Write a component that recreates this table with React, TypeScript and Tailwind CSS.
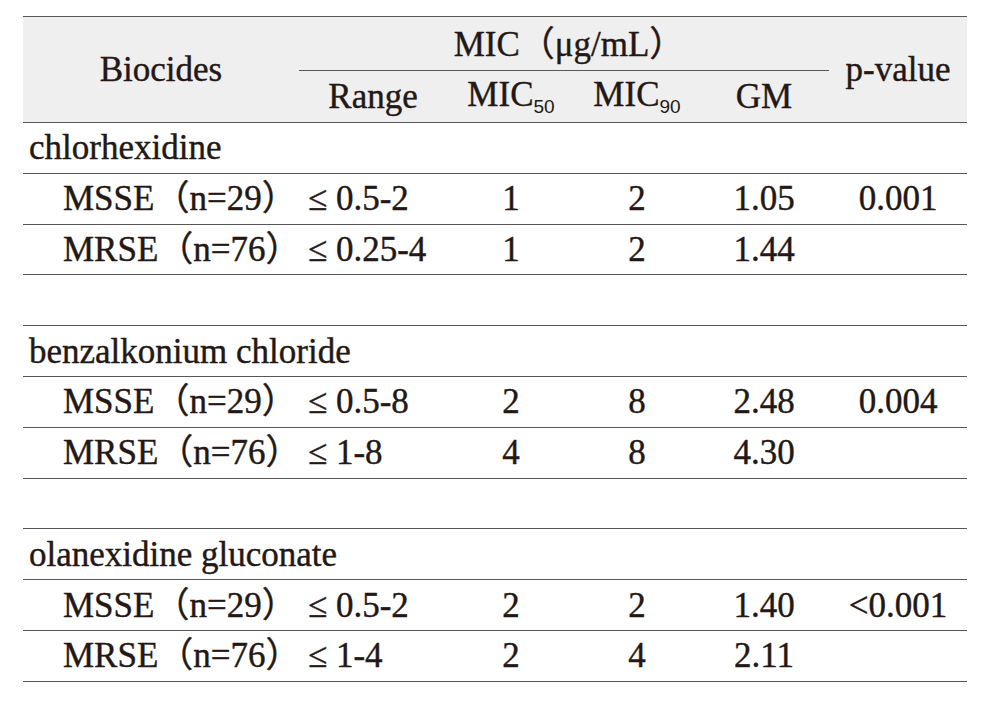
import React from 'react';

const cols = 'grid grid-cols-[276px_148px_128px_124px_130px_138px]';
const line = 'border-[#5a5656]';

type Sub = { name: string; range: string; m50: string; m90: string; gm: string; p?: string };
type Group = { title: string; rows: Sub[] };

const groups: Group[] = [
  {
    title: 'chlorhexidine',
    rows: [
      { name: 'MSSE（n=29）', range: '≤ 0.5-2', m50: '1', m90: '2', gm: '1.05', p: '0.001' },
      { name: 'MRSE（n=76）', range: '≤ 0.25-4', m50: '1', m90: '2', gm: '1.44' },
    ],
  },
  {
    title: 'benzalkonium chloride',
    rows: [
      { name: 'MSSE（n=29）', range: '≤ 0.5-8', m50: '2', m90: '8', gm: '2.48', p: '0.004' },
      { name: 'MRSE（n=76）', range: '≤ 1-8', m50: '4', m90: '8', gm: '4.30' },
    ],
  },
  {
    title: 'olanexidine gluconate',
    rows: [
      { name: 'MSSE（n=29）', range: '≤ 0.5-2', m50: '2', m90: '2', gm: '1.40', p: '<0.001' },
      { name: 'MRSE（n=76）', range: '≤ 1-4', m50: '2', m90: '4', gm: '2.11' },
    ],
  },
];

function Row({ children }: { children?: React.ReactNode }) {
  return <div className={`${cols} h-[50.8px] border-b-[1.5px] ${line} items-center`}>{children}</div>;
}

function Mic({ n }: { n: string }) {
  return (
    <div className="flex items-end justify-center pb-[10px]">
      <span>MIC</span>
      <span className="text-[19px] [font-family:Liberation_Sans,sans-serif] [-webkit-text-stroke:0px] mb-[-4px]">{n}</span>
    </div>
  );
}

export default function App() {
  return (
    <div className="w-[990px] h-[715px] bg-white text-[#231815] text-[35px] leading-none [font-family:Liberation_Serif,Noto_Sans_CJK_JP,serif] [-webkit-text-stroke:0.4px_#231815]">
      <div className="pt-[16px] pl-[23px]">
        <div className="w-[944px]">
          {/* header */}
          <div className={`${cols} grid-rows-[54px_51px] bg-[#efefef] border-t-[1.5px] border-b-[1.5px] ${line}`}>
            <div className="row-span-2 flex items-center justify-center">Biocides</div>
            <div className={`col-span-4 flex items-center justify-center border-b-[1.5px] ${line} pt-[2px] pl-[10px]`}>
              MIC（μg/mL）
            </div>
            <div className="row-span-2 col-start-6 row-start-1 flex items-center justify-center">p-value</div>
            <div className="flex items-center justify-center">Range</div>
            <Mic n="50" />
            <Mic n="90" />
            <div className="flex items-center justify-center">GM</div>
          </div>

          {groups.map((g, gi) => (
            <React.Fragment key={g.title}>
              {gi > 0 && <Row />}
              <Row>
                <div className="col-span-6 pl-[6px]">{g.title}</div>
              </Row>
              {g.rows.map((r) => (
                <Row key={r.name}>
                  <div className="pl-[40px] whitespace-nowrap">{r.name}</div>
                  <div className="pl-[9px] whitespace-nowrap">{r.range}</div>
                  <div className="text-center">{r.m50}</div>
                  <div className="text-center">{r.m90}</div>
                  <div className="text-center">{r.gm}</div>
                  <div className="text-center">{r.p ?? ''}</div>
                </Row>
              ))}
            </React.Fragment>
          ))}
        </div>
      </div>
    </div>
  );
}
